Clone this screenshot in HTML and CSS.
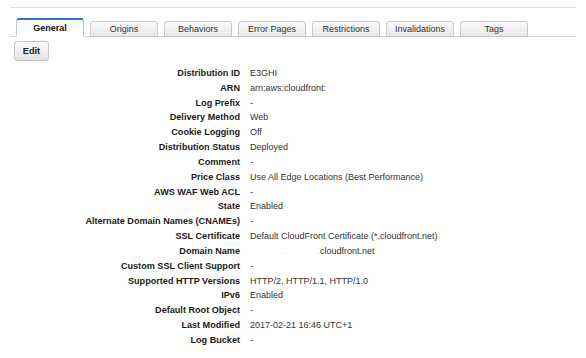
FILE: index.html
```html
<!DOCTYPE html>
<html lang="en">
<head>
    <meta charset="UTF-8">
    <meta name="viewport" content="width=device-width, initial-scale=1.0">
    <title>CloudFront Distribution</title>
    <link rel="stylesheet" href="styles.css">
</head>
<body>
    <div class="panel">
        <div class="tabs">
            <div class="tab active">General</div>
            <div class="tab">Origins</div>
            <div class="tab">Behaviors</div>
            <div class="tab">Error Pages</div>
            <div class="tab">Restrictions</div>
            <div class="tab">Invalidations</div>
            <div class="tab">Tags</div>
        </div>

        <button class="edit-button">Edit</button>

        <dl class="details">
            <dt>Distribution ID</dt><dd>E3GHI</dd>
            <dt>ARN</dt><dd>arn:aws:cloudfront:</dd>
            <dt>Log Prefix</dt><dd>-</dd>
            <dt>Delivery Method</dt><dd>Web</dd>
            <dt>Cookie Logging</dt><dd>Off</dd>
            <dt>Distribution Status</dt><dd>Deployed</dd>
            <dt>Comment</dt><dd>-</dd>
            <dt>Price Class</dt><dd>Use All Edge Locations (Best Performance)</dd>
            <dt>AWS WAF Web ACL</dt><dd>-</dd>
            <dt>State</dt><dd>Enabled</dd>
            <dt>Alternate Domain Names (CNAMEs)</dt><dd>-</dd>
            <dt>SSL Certificate</dt><dd>Default CloudFront Certificate (*.cloudfront.net)</dd>
            <dt>Domain Name</dt><dd><span class="blurred">.</span><span class="blurred">.</span>cloudfront.net</dd>
            <dt>Custom SSL Client Support</dt><dd>-</dd>
            <dt>Supported HTTP Versions</dt><dd>HTTP/2, HTTP/1.1, HTTP/1.0</dd>
            <dt>IPv6</dt><dd>Enabled</dd>
            <dt>Default Root Object</dt><dd>-</dd>
            <dt>Last Modified</dt><dd>2017-02-21 16:46 UTC+1</dd>
            <dt>Log Bucket</dt><dd>-</dd>
        </dl>
    </div>
</body>
</html>
```

FILE: styles.css
```css
* {
    margin: 0;
    padding: 0;
    box-sizing: border-box;
}

body {
    font-family: "Liberation Sans", Arial, sans-serif;
    font-size: 9px;
    color: #222;
    background: #fff;
}

.panel {
    margin: 7px 10px 0 10px;
    width: 566px;
    border-top: 1px solid #dcdcdc;
}

.tabs {
    display: flex;
    align-items: flex-end;
    gap: 6px;
    height: 29px;
    padding-left: 6px;
    border-bottom: 1px solid #d4d4d4;
}

.tab {
    width: 68px;
    height: 16px;
    margin-bottom: -1px;
    line-height: 15px;
    text-align: center;
    color: #333;
    background: linear-gradient(#fbfbfb, #e6e6e6);
    border: 1px solid #c8c8c8;
    border-radius: 3px 3px 0 0;
}

.tab.active {
    height: 19px;
    line-height: 17px;
    font-weight: bold;
    color: #111;
    background: #fff;
    border-top: 2px solid #2a73c8;
    border-bottom: 1px solid #fff;
}

.edit-button {
    display: block;
    margin: 4px 0 0 4px;
    width: 35px;
    height: 20px;
    font-family: inherit;
    font-size: 9.2px;
    font-weight: bold;
    color: #222;
    background: linear-gradient(#fdfdfd, #e2e2e2);
    border: 1px solid #c4c4c4;
    border-radius: 3px;
}

.details {
    display: grid;
    grid-template-columns: 230px 1fr;
    column-gap: 10px;
    margin-top: 5px;
    line-height: 14.83px;
}

.details dt {
    text-align: right;
    font-size: 9.1px;
    font-weight: bold;
    color: #1a1a1a;
    white-space: nowrap;
}

.details dd {
    color: #333;
    white-space: nowrap;
}

.blurred {
    display: inline-block;
    color: #d0d0d0;
    width: 35px;
    text-align: right;
}
```
